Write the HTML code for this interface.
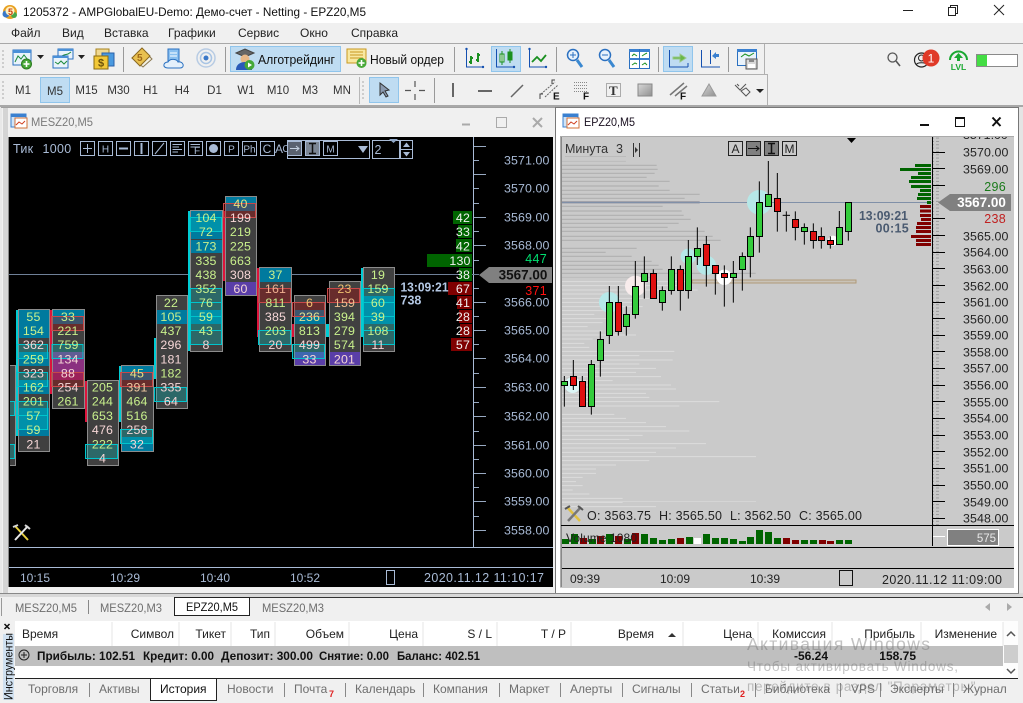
<!DOCTYPE html>
<html><head><meta charset="utf-8"><title>MT5</title>
<style>
html,body{margin:0;padding:0;background:#f0f0f0;overflow:hidden}
svg{display:block;font-family:"Liberation Sans",sans-serif}
rect{shape-rendering:crispEdges}
text{font-size:12px;fill:#222}
.ax text{font-size:12.4px;fill:#a9bbd6;letter-spacing:.1px}
.ar text{font-size:12.4px;fill:#222;letter-spacing:.1px}
.fp text{font-size:12.4px;text-anchor:middle;letter-spacing:.2px}
.g{fill:#c8f08c}.p{fill:#f5d6d6}
.t{fill:#007a9e}.m{fill:#8a3080}.u{fill:#5a3ea8}
.cb{fill:rgba(0,200,200,.3);stroke:#00c4cc;stroke-width:1}
.rb{fill:rgba(200,0,0,.3);stroke:#c84848;stroke-width:1}
.col{fill:#404040;stroke:#8c8c8c;stroke-width:1}
.tb text{font-size:11.5px;fill:#333;text-anchor:middle}
.hd text{text-anchor:end;fill:#222}
.tab text{fill:#6e6e6e}
.btn{fill:#bfdcf2;stroke:#90c5ec}
.cnd .u1{fill:#34cc3c;stroke:#000;stroke-width:3}
.cnd .d1{fill:#e01010;stroke:#000;stroke-width:3}
.lb rect{fill:none;stroke:#a9bbd6}
.lb text{font-size:10px;fill:#a9bbd6;text-anchor:middle}
</style></head><body>
<svg width="1023" height="703" viewBox="0 0 1023 703" xmlns="http://www.w3.org/2000/svg">
<defs>
<pattern id="mn" width="8" height="3.332" patternUnits="userSpaceOnUse" y="1"><rect width="6" height="1" fill="#9a9a9a"/></pattern>
<linearGradient id="gr" x1="0" y1="0" x2="1" y2="1"><stop offset="0" stop-color="#d8d8d8"/><stop offset="1" stop-color="#909090"/></linearGradient>
</defs>
<rect width="1023" height="703" fill="#f0f0f0"/>
<!-- title -->
<rect width="1023" height="23" fill="#fff"/>
<g>
<circle cx="10" cy="12" r="7" fill="#e8a020"/><circle cx="6" cy="14" r="3.5" fill="#3a78c8"/><circle cx="14" cy="15" r="3" fill="#48a848"/><circle cx="10" cy="11" r="4.5" fill="#fff2c0"/>
<text x="8" y="15" style="font-size:9px;font-weight:bold;fill:#c84010">5</text>
</g>
<text x="23" y="16" textLength="343" lengthAdjust="spacingAndGlyphs" style="font-size:12px;fill:#111">1205372 - AMPGlobalEU-Demo: Демо-счет - Netting - EPZ20,M5</text>
<path d="M903 10.5H913M1004 5L994 15M994 5L1004 15" stroke="#222" fill="none"/>
<path d="M948.5 7.5H955.5V15.5H948.5ZM950.5 7.5V5.5H957.5V13.5H955.5" stroke="#222" fill="none"/>
<!-- menu -->
<g style="fill:#222">
<text x="11" y="37">Файл</text><text x="62" y="37">Вид</text><text x="104" y="37">Вставка</text><text x="168" y="37">Графики</text><text x="238" y="37">Сервис</text><text x="300" y="37">Окно</text><text x="351" y="37">Справка</text>
</g>
<rect x="0" y="43" width="1023" height="1" fill="#a8a8a8"/>
<rect x="0" y="74" width="768" height="1" fill="#b0b0b0"/>
<rect x="764" y="44" width="1" height="30" fill="#b0b0b0"/>
<rect x="767" y="75" width="1" height="30" fill="#b0b0b0"/>
<rect x="0" y="105" width="1023" height="2" fill="#a8a8a8"/>
<rect x="359" y="77" width="1" height="27" fill="#b8b8b8"/>
<path d="M3 50V70M3 81V101" stroke="#aaa" stroke-dasharray="2 2"/>
<path d="M363 81V101" stroke="#aaa" stroke-dasharray="2 2"/>
<!-- toolbar1 icons -->
<g>
<rect x="13" y="50" width="18" height="15" fill="#eaf3fb" stroke="#2a70c0"/><rect x="13" y="50" width="18" height="3" fill="#4a90d8"/>
<path d="M15 62L18 56L21 59L24 55L28 60" stroke="#1c8a3c" fill="none"/>
<circle cx="26.500" cy="64" r="5" fill="#48a838" stroke="#2c7a20"/><path d="M23.500 64H29.500M26.500 61V67" stroke="#fff" stroke-width="1.600"/>
<path d="M37 55H44L40.500 59Z" fill="#222"/>
<rect x="58" y="49" width="15" height="10" fill="#eaf3fb" stroke="#2a70c0"/><rect x="58" y="49" width="15" height="2" fill="#4a90d8"/>
<path d="M60 57L64 55L68 54L71 52" stroke="#1c8a3c" fill="none"/>
<rect x="53" y="56" width="15" height="12" fill="#eaf3fb" stroke="#2a70c0"/><rect x="53" y="56" width="15" height="2" fill="#4a90d8"/>
<path d="M55 62L58 64L61 61L64 64L67 61" stroke="#1c8a3c" fill="none"/>
<path d="M78 55H85L81.500 59Z" fill="#222"/>
<rect x="96" y="49" width="13" height="13" fill="#f0d890" stroke="#a88420"/>
<rect x="102" y="53" width="12" height="13" fill="#4a9ae0" stroke="#2a60a8"/>
<rect x="94" y="56" width="14" height="13" fill="#f2c838" stroke="#8a6a10"/>
<text x="98" y="66.500" style="font-size:11px;font-weight:bold;fill:#6a5008">$</text>
<rect x="123" y="47" width="1" height="25" fill="#999"/>
<path d="M143 50L152 59L143 67L132 58Z" fill="#f2f0e4" stroke="#8a7850"/>
<path d="M132 58L142 48L150 56L140 66Z" fill="#e8c050" stroke="#8a6820"/>
<text x="137" y="61" style="font-size:10px;font-weight:bold;fill:#a06818">5</text>
<rect x="168" y="49" width="11" height="14" fill="#8ac0f0" stroke="#2a70c0"/><path d="M170 53H177M170 56H177" stroke="#fff"/>
<path d="M168 68C162 68 163 62 168 62C170 58 177 59 178 62C184 61 185 68 180 68Z" fill="#e4f0fb" stroke="#2a70c0"/>
<circle cx="206" cy="58" r="2.500" fill="#3a78c8"/><circle cx="206" cy="58" r="5.500" fill="none" stroke="#a8c4e4" stroke-width="1.500"/><circle cx="206" cy="58" r="9" fill="none" stroke="#b8cce4" stroke-width="1.500"/>
<rect x="225" y="47" width="1" height="25" fill="#999"/>
<rect class="btn" x="230.500" y="46.500" width="110" height="25"/>
<path d="M236 53L245 49L254 53L245 57Z" fill="#666" stroke="#444"/>
<circle cx="245" cy="59" r="4.500" fill="#e8b888"/><path d="M236 70C236 64 241 62 245 62C249 62 252 64 252 70Z" fill="#2a5ab8"/>
<circle cx="249.500" cy="65" r="5" fill="#44a838"/><path d="M248 62.500L252 65L248 67.500Z" fill="#fff"/>
<text x="258" y="64" textLength="77" lengthAdjust="spacingAndGlyphs" style="font-size:12.500px;fill:#111">Алготрейдинг</text>
<rect x="347" y="49" width="19" height="14" fill="#f8e8a0" stroke="#c89820"/><path d="M350 52H363M350 55H363M350 58H363" stroke="#c89820"/>
<circle cx="361.500" cy="63" r="5" fill="#48a838"/><path d="M358.500 63H364.500M361.500 60V66" stroke="#fff" stroke-width="1.600"/>
<text x="370" y="64" textLength="74" lengthAdjust="spacingAndGlyphs" style="font-size:12.500px;fill:#111">Новый ордер</text>
<rect x="454" y="47" width="1" height="25" fill="#999"/>
<!-- chart types -->
<path d="M466.500 49V67H484" stroke="#1450b0" fill="none"/><circle cx="466.500" cy="49" r="1.200" fill="#1450b0"/><circle cx="483" cy="67" r="1.200" fill="#1450b0"/>
<path d="M471 56V64M469 62H471M471 58H473M478 53V62M476 60H478M478 55H480" stroke="#1a9020" stroke-width="2" fill="none"/>
<rect class="btn" x="491.500" y="46.500" width="29" height="25"/>
<path d="M496.500 49V67H515" stroke="#1450b0" fill="none"/><circle cx="514" cy="67" r="1.200" fill="#1450b0"/>
<rect x="500" y="54" width="4" height="8" fill="#fff" stroke="#1a9020"/><rect x="508" y="52" width="4" height="8" fill="#1a9020" stroke="#1a9020"/><path d="M502 51V65M510 49V63" stroke="#1a9020"/>
<path d="M529.500 49V67H547" stroke="#1450b0" fill="none"/><circle cx="546" cy="67" r="1.200" fill="#1450b0"/><circle cx="529.500" cy="49" r="1.200" fill="#1450b0"/>
<path d="M532 62L537 57L541 61L546 55" stroke="#1a9020" stroke-width="1.800" fill="none"/>
<rect x="556" y="47" width="1" height="25" fill="#999"/>
<circle cx="573" cy="55" r="5.500" fill="#e8f2fb" stroke="#2a70c0" stroke-width="1.500"/><path d="M570 55H576M573 52V58" stroke="#2a70c0"/><path d="M577 60L582 67" stroke="#3a88d0" stroke-width="3"/>
<circle cx="605" cy="55" r="5.500" fill="#e8f2fb" stroke="#2a70c0" stroke-width="1.500"/><path d="M602 55H608" stroke="#2a70c0"/><path d="M609 60L614 67" stroke="#3a88d0" stroke-width="3"/>
<rect x="629.500" y="49.500" width="20" height="19" fill="#fff" stroke="#2a70c0"/><rect x="629" y="49" width="21" height="3" fill="#3a80d0"/><rect x="629" y="58" width="21" height="2" fill="#3a80d0"/><rect x="639" y="49" width="1" height="20" fill="#2a70c0"/>
<path d="M632 56L634 54L637 56M642 56L645 54L647 53M632 65L635 63L637 64M642 65L645 63L647 65" stroke="#1a9020" fill="none"/>
<rect x="658" y="47" width="1" height="25" fill="#999"/>
<rect class="btn" x="663.500" y="46.500" width="29" height="25"/>
<path d="M669.500 50V67H688M688 63V67" stroke="#1450b0" fill="none"/>
<path d="M673 57H680V54L686 58L680 62V59H673Z" fill="#68b848" stroke="#9ac888"/>
<path d="M701.500 50V67H720M710.500 50V64" stroke="#1450b0" fill="none"/>
<path d="M719 54H716V52L712 56L716 59V57H719Z" fill="#3a80d0"/>
<rect x="728" y="47" width="1" height="25" fill="#999"/>
<rect x="737.500" y="49.500" width="19" height="16" fill="#eaf3fb" stroke="#2a70c0"/><rect x="737" y="49" width="20" height="3" fill="#3a80d0"/>
<path d="M741 57L745 54L749 56L754 53" stroke="#1a9020" fill="none"/>
<path d="M746 59H757V69H746Z" fill="#d8d8d8" stroke="#555"/><rect x="749" y="59" width="5" height="3" fill="#888"/><rect x="748" y="64" width="7" height="4" fill="#fff"/>
<!-- right status -->
<circle cx="892.500" cy="57.500" r="4.500" fill="none" stroke="#555" stroke-width="1.300"/><path d="M896 61L900 66" stroke="#555" stroke-width="1.600"/>
<circle cx="921.500" cy="60" r="7" fill="none" stroke="#222" stroke-width="1.200"/><circle cx="921.500" cy="58" r="3" fill="none" stroke="#222"/><path d="M916 65C917 62 926 62 927 65" fill="none" stroke="#222"/>
<circle cx="931" cy="58" r="8.500" fill="#e03a28"/><text x="931" y="62.500" style="font-size:12px;fill:#fff;text-anchor:middle">1</text>
<path d="M950 60A8.500 8.500 0 0 1 967 60" fill="none" stroke="#1aa832" stroke-width="2"/><path d="M958.500 53L963 58H960V61H957V58H954Z" fill="#1aa832"/>
<text x="958.500" y="70" style="font-size:8.500px;fill:#1aa832;text-anchor:middle;font-weight:bold">LVL</text>
<rect x="976.500" y="54.500" width="41" height="12" fill="#fff" stroke="#8a8a8a"/><rect x="977" y="55" width="10" height="11" fill="#44dd44"/>
<!-- toolbar2 -->
<rect class="btn" x="40.500" y="77.500" width="29" height="25"/>
<g class="tb">
<text x="23" y="94">M1</text><text x="55" y="95">M5</text><text x="86.500" y="94">M15</text><text x="118.500" y="94">M30</text><text x="150.500" y="94">H1</text><text x="182" y="94">H4</text><text x="214.500" y="94">D1</text><text x="246" y="94">W1</text><text x="278" y="94">M10</text><text x="310" y="94">M3</text><text x="342" y="94">MN</text>
</g>
<rect class="btn" x="369.500" y="77.500" width="29" height="25"/>
<path d="M380 83L380 95L383 92L386 97L388 96L385 91L389 90Z" fill="#8a9ab0" stroke="#333"/>
<path d="M405 90.500H411M419 90.500H425M415 81V87M415 94V100" stroke="#555" stroke-width="1.200"/>
<rect x="434" y="78" width="1" height="25" fill="#999"/>
<rect x="452" y="83" width="2" height="14" fill="#666"/>
<rect x="478" y="90" width="14" height="2" fill="#666"/>
<path d="M511 97L523 85" stroke="#666" stroke-width="1.500"/>
<path d="M541 94L555 82M545 97L558 85" stroke="#666" stroke-dasharray="2 1"/><path d="M540 99V94H543M552 84V80H555" stroke="#444" fill="none"/>
<text x="553" y="99.500" style="font-size:10px;font-weight:bold;fill:#111">E</text>
<path d="M574 82.500H587M574 85.500H587M574 88.500H587M574 91.500H587" stroke="#888" stroke-dasharray="1 1"/>
<text x="583" y="99.500" style="font-size:10px;font-weight:bold;fill:#111">F</text>
<rect x="606.500" y="83.500" width="14" height="13" fill="none" stroke="#666" stroke-dasharray="1 1"/>
<text x="609" y="95" style="font-family:'Liberation Serif',serif;font-size:13px;font-weight:bold;fill:#333">T</text>
<rect x="638" y="84" width="14" height="12" fill="url(#gr)" stroke="#888"/>
<path d="M670 95L684 83M675 96L687 86" stroke="#777" stroke-width="1.500"/>
<text x="680" y="99.500" style="font-size:10px;font-weight:bold;fill:#111">F</text>
<path d="M702 96L709 84L716 96Z" fill="url(#gr)" stroke="#999"/>
<path d="M735 85L740 90L746 84M737 84L739 86M741 91L746 96L750 92L746 88Z" fill="none" stroke="#555"/>
<path d="M756 89H764L760 93Z" fill="#222"/>

<!-- left window -->
<rect x="0" y="107" width="555" height="487" fill="#f0f0f0"/>
<rect x="0" y="107" width="2" height="487" fill="#e8e8e8"/>
<rect x="3" y="107" width="5" height="487" fill="#d4d4d4"/>
<rect x="8" y="137" width="1" height="450" fill="#888"/>
<rect x="1" y="107" width="554" height="1" fill="#a0a0a0"/>
<g>
<rect x="11" y="114" width="15" height="13" fill="#cfe4f8" stroke="#3a80d0"/><rect x="11" y="114" width="15" height="3" fill="#3a80d0"/><rect x="15" y="118" width="12" height="10" fill="#fff" stroke="#d07038"/><path d="M16 125L19 122L22 124L25 121" stroke="#d04020" fill="none"/>
</g>
<text x="31" y="126" style="fill:#7a7a7a" textLength="62" lengthAdjust="spacingAndGlyphs">MESZ20,M5</text>
<path d="M462 124.500H470" stroke="#aaa" stroke-width="2"/>
<rect x="496.500" y="117.500" width="10" height="10" fill="none" stroke="#aaa"/>
<path d="M533 118L542 127M542 118L533 127" stroke="#aaa" stroke-width="2"/>
<rect x="9" y="137" width="544" height="450" fill="#000"/>
<!-- left axis -->
<rect x="473" y="137" width="1" height="410" fill="#a9bbd6"/>
<path d="M473 146.500H486M473 160.500H479M473 174.500H486M473 188.500H479M473 203.500H479M473 217.500H486M473 231.500H479M473 245.500H486M473 260.500H479M473 288.500H479M473 302.500H486M473 316.500H479M473 330.500H486M473 344.500H479M473 358.500H486M473 373.500H479M473 387.500H486M473 402.500H479M473 416.500H486M473 431.500H479M473 445.500H486M473 459.500H479M473 473.500H486M473 487.500H479M473 501.500H486M473 516.500H479M473 530.500H486" stroke="#a9bbd6" fill="none" opacity=".9"/>
<g class="ax">
<text x="504" y="164.500">3571.00</text><text x="504" y="192.500">3570.00</text><text x="504" y="221.500">3569.00</text><text x="504" y="249.500">3568.00</text><text x="504" y="306.500">3566.00</text><text x="504" y="334.500">3565.00</text><text x="504" y="362.500">3564.00</text><text x="504" y="391.500">3563.00</text><text x="504" y="420.500">3562.00</text><text x="504" y="449.500">3561.00</text><text x="504" y="477.500">3560.00</text><text x="504" y="505.500">3559.00</text><text x="504" y="534.500">3558.00</text>
</g>
<rect x="9" y="274" width="470" height="1" fill="#6f8098"/>
<!-- left footprint -->
<g class="fp">
<!-- bars -->
<rect x="16" y="310" width="2" height="126" fill="#00ccd4"/>
<rect x="50" y="310" width="3" height="84" fill="#dc143c"/>
<rect x="85" y="381" width="3" height="41" fill="#dc143c"/>
<rect x="119" y="366" width="2" height="56" fill="#00ccd4"/>
<rect x="154" y="338" width="2" height="41" fill="#00ccd4"/>
<rect x="188" y="211" width="2" height="140" fill="#00ccd4"/>
<rect x="223" y="211" width="2" height="70" fill="#dc143c"/>
<rect x="257" y="268" width="2" height="69" fill="#dc143c"/>
<rect x="291" y="324" width="3" height="13" fill="#dc143c"/>
<rect x="326" y="324" width="3" height="13" fill="#00ccd4"/>
<rect x="361" y="268" width="2" height="69" fill="#00ccd4"/>
<!-- col A -->
<rect fill="#404040" x="10" y="366" width="5" height="99"/>
<path d="M10 365.500H15.500V465.500H10" fill="none" stroke="#8c8c8c"/>
<rect fill="#2d6969" x="10" y="401" width="5" height="14"/><rect fill="#2d6969" x="10" y="444" width="5" height="14"/>
<path d="M10 401.500H14.500V415.500H10M10 444.500H14.500V458.500H10" fill="none" stroke="#00c4cc"/>
<!-- col B -->
<rect class="col" x="18.500" y="309.500" width="31" height="142"/>
<rect class="t" x="19" y="310" width="30" height="28"/><rect class="t" x="19" y="352" width="30" height="14"/><rect class="t" x="19" y="380" width="30" height="14"/><rect class="t" x="19" y="408" width="30" height="28"/>
<rect class="cb" x="16.500" y="344.500" width="31" height="14"/><rect class="cb" x="16.500" y="372.500" width="31" height="14"/><rect class="cb" x="16.500" y="401.500" width="31" height="14"/><rect class="cb" x="16.500" y="415.500" width="31" height="14"/>
<text class="g" x="33.500" y="321">55</text><text class="g" x="33.500" y="335">154</text><text class="p" x="33.500" y="349">362</text><text class="g" x="33.500" y="363.500">259</text><text class="p" x="33.500" y="377.500">323</text><text class="g" x="33.500" y="391.500">162</text><text class="g" x="33.500" y="405.500">201</text><text class="g" x="33.500" y="420">57</text><text class="g" x="33.500" y="434">59</text><text class="p" x="33.500" y="448.500">21</text>
<!-- col C -->
<rect class="col" x="52.500" y="309.500" width="32" height="99"/>
<rect class="t" x="53" y="310" width="31" height="14"/><rect class="m" x="53" y="352" width="31" height="28"/>
<rect class="cb" x="52" y="344.500" width="31" height="14"/><rect class="rb" x="51.500" y="316.500" width="32" height="14"/><rect class="rb" x="51.500" y="372.500" width="32" height="14"/>
<text class="g" x="68" y="321">33</text><text class="g" x="68" y="335">221</text><text class="g" x="68" y="349">759</text><text class="p" x="68" y="363.500">134</text><text class="p" x="68" y="377.500">88</text><text class="p" x="68" y="391.500">254</text><text class="g" x="68" y="405.500">261</text>
<!-- col D -->
<rect class="col" x="87.500" y="380.500" width="31" height="85"/>
<rect class="cb" x="85.500" y="444.500" width="32" height="14"/>
<text class="g" x="102.500" y="391.500">205</text><text class="g" x="102.500" y="405.500">244</text><text class="g" x="102.500" y="420">653</text><text class="p" x="102.500" y="434">476</text><text class="g" x="102.500" y="448.500">222</text><text class="p" x="102.500" y="462.500">4</text>
<!-- col E -->
<rect class="col" x="121.500" y="365.500" width="32" height="86"/>
<rect class="t" x="122" y="366" width="31" height="14"/><rect class="t" x="122" y="437" width="31" height="14"/>
<rect class="rb" x="120.500" y="372.500" width="32" height="14"/><rect class="cb" x="120.500" y="429.500" width="32" height="14"/>
<text class="g" x="137" y="377.500" style="fill:#e8e080">45</text><text class="g" x="137" y="391.500" style="fill:#f0c8a0">391</text><text class="g" x="137" y="405.500">464</text><text class="g" x="137" y="420">516</text><text class="p" x="137" y="434">258</text><text class="p" x="137" y="448.500">32</text>
<!-- col F -->
<rect class="col" x="156.500" y="295.500" width="31" height="113"/>
<rect class="t" x="157" y="310" width="30" height="14"/>
<rect class="cb" x="154.500" y="387.500" width="32" height="14"/>
<text class="g" x="171" y="307">22</text><text class="g" x="171" y="321">105</text><text class="g" x="171" y="335">437</text><text class="p" x="171" y="349">296</text><text class="p" x="171" y="363.500">181</text><text class="g" x="171" y="377.500">182</text><text class="p" x="171" y="391.500">335</text><text class="p" x="171" y="405.500">64</text>
<!-- col G -->
<rect class="col" x="190.500" y="210.500" width="32" height="141"/>
<rect class="t" x="191" y="211" width="31" height="42"/><rect class="t" x="191" y="310" width="31" height="14"/>
<rect fill="#404040" x="191" y="239" width="31" height="1"/>
<rect class="cb" x="190.500" y="217.500" width="31" height="14"/><rect class="cb" x="190.500" y="288.500" width="31" height="14"/><rect class="cb" x="190.500" y="302.500" width="31" height="14"/><rect class="cb" x="190.500" y="316.500" width="31" height="14"/><rect class="cb" x="190.500" y="330.500" width="31" height="14"/>
<text class="g" x="206" y="222">104</text><text class="g" x="206" y="236">72</text><text class="g" x="206" y="250.500">173</text><text class="g" x="206" y="265">335</text><text class="g" x="206" y="279">438</text><text class="g" x="206" y="293">352</text><text class="g" x="206" y="307">76</text><text class="g" x="206" y="321">59</text><text class="g" x="206" y="335">43</text><text class="p" x="206" y="349">8</text>
<!-- col H -->
<rect class="col" x="225.500" y="196.500" width="31" height="99"/>
<rect class="t" x="226" y="197" width="30" height="14"/><rect class="u" x="226" y="282" width="30" height="13"/>
<rect class="rb" x="223.500" y="203.500" width="32" height="14"/>
<text class="g" x="240.500" y="208" style="fill:#e8e080">40</text><text class="p" x="240.500" y="222">199</text><text class="g" x="240.500" y="236">219</text><text class="g" x="240.500" y="250.500">225</text><text class="g" x="240.500" y="265">663</text><text class="p" x="240.500" y="279">308</text><text class="p" x="240.500" y="293">60</text>
<!-- col I -->
<rect class="col" x="259.500" y="267.500" width="32" height="84"/>
<rect class="t" x="260" y="268" width="31" height="14"/>
<rect class="rb" x="258.500" y="288.500" width="32" height="14"/><rect class="cb" x="258.500" y="330.500" width="32" height="14"/>
<text class="g" x="275.500" y="279">37</text><text class="g" x="275.500" y="293" style="fill:#f0b090">161</text><text class="g" x="275.500" y="307">811</text><text class="p" x="275.500" y="321">385</text><text class="g" x="275.500" y="335">203</text><text class="p" x="275.500" y="349">20</text>
<!-- col J -->
<rect class="col" x="294.500" y="295.500" width="31" height="70"/>
<rect class="t" x="295" y="310" width="30" height="14"/><rect class="u" x="295" y="352" width="30" height="13"/>
<rect class="rb" x="292.500" y="302.500" width="32" height="14"/><rect class="cb" x="292.500" y="344.500" width="32" height="14"/>
<text class="g" x="309.500" y="307" style="fill:#f0c070">6</text><text class="g" x="309.500" y="321" style="fill:#e0e090">236</text><text class="g" x="309.500" y="335">813</text><text class="p" x="309.500" y="349">499</text><text class="p" x="309.500" y="363.500">33</text>
<!-- col K -->
<rect class="col" x="329.500" y="281.500" width="31" height="84"/>
<rect class="u" x="330" y="352" width="30" height="13"/>
<rect class="rb" x="327.500" y="288.500" width="32" height="14"/>
<text class="g" x="344.500" y="293" style="fill:#f0c070">23</text><text class="g" x="344.500" y="307" style="fill:#f0c090">159</text><text class="g" x="344.500" y="321">394</text><text class="g" x="344.500" y="335">279</text><text class="g" x="344.500" y="349">574</text><text class="p" x="344.500" y="363.500">201</text>
<!-- col L -->
<rect class="col" x="363.500" y="267.500" width="31" height="84"/>
<rect class="t" x="364" y="296" width="30" height="28"/>
<rect class="cb" x="363.500" y="288.500" width="31" height="14"/><rect class="cb" x="363.500" y="302.500" width="31" height="14"/><rect class="cb" x="363.500" y="316.500" width="31" height="14"/><rect class="cb" x="363.500" y="330.500" width="31" height="14"/>
<text class="g" x="378" y="279">19</text><text class="g" x="378" y="293">159</text><text class="g" x="378" y="307">60</text><text class="g" x="378" y="321">39</text><text class="g" x="378" y="335">108</text><text class="p" x="378" y="349">11</text>
<!-- DOM -->
<rect fill="#006400" x="453" y="211" width="19" height="13"/><rect fill="#006400" x="458" y="225" width="14" height="13"/><rect fill="#006400" x="456" y="239" width="16" height="13"/><rect fill="#006400" x="427" y="254" width="45" height="13"/><rect fill="#006400" x="459" y="268" width="13" height="13"/>
<rect fill="#7f0000" x="448" y="282" width="24" height="13"/><rect fill="#7f0000" x="457" y="296" width="15" height="13"/><rect fill="#7f0000" x="459" y="310" width="13" height="13"/><rect fill="#7f0000" x="460" y="324" width="12" height="13"/><rect fill="#7f0000" x="451" y="338" width="21" height="13"/>
<text x="463" y="222" style="fill:#f0f0f0">42</text><text x="463" y="236" style="fill:#f0f0f0">33</text><text x="463" y="250.500" style="fill:#f0f0f0">42</text><text x="460" y="265" style="fill:#f0f0f0">130</text><text x="463" y="279" style="fill:#f0f0f0">38</text><text x="463" y="293" style="fill:#f0f0f0">67</text><text x="463" y="307" style="fill:#f0f0f0">41</text><text x="463" y="321" style="fill:#f0f0f0">28</text><text x="463" y="335" style="fill:#f0f0f0">28</text><text x="463" y="349" style="fill:#f0f0f0">57</text>
</g>
<text x="547" y="263" style="font-size:12.500px;fill:#00e070;text-anchor:end;letter-spacing:.3px">447</text>
<text x="547" y="295" style="font-size:12.500px;fill:#ff1010;text-anchor:end;letter-spacing:.3px">371</text>
<path d="M479 275L489 267H552V283H489Z" fill="#808080"/>
<text x="523" y="279.500" style="font-size:13.500px;font-weight:bold;fill:#111;text-anchor:middle">3567.00</text>
<text x="400.500" y="291.500" textLength="48" lengthAdjust="spacingAndGlyphs" style="font-size:12.500px;font-weight:bold;fill:#b4c8e4">13:09:21</text>
<text x="400.500" y="304.500" style="font-size:12.500px;font-weight:bold;fill:#b4c8e4">738</text>
<!-- left top labels -->
<g class="lb">
<text x="13" y="153" style="font-size:12.500px;text-anchor:start;letter-spacing:.3px">Тик</text>
<text x="42.500" y="153" style="font-size:12.500px;text-anchor:start;letter-spacing:.3px">1000</text>
<rect x="80.500" y="141.500" width="14" height="14"/><path d="M83 148.500H92M87.500 144V153" stroke="#a9bbd6"/>
<rect x="98.500" y="141.500" width="14" height="14"/><text x="105.500" y="152.500">H</text>
<rect x="116.500" y="141.500" width="14" height="14"/><path d="M119 148.500H128" stroke="#a9bbd6" stroke-width="2"/>
<rect x="134.500" y="141.500" width="14" height="14"/><path d="M141.500 143V154" stroke="#a9bbd6" stroke-width="2"/>
<rect x="152.500" y="141.500" width="14" height="14"/><path d="M155 154L164 143" stroke="#a9bbd6"/>
<rect x="170.500" y="141.500" width="14" height="14"/><path d="M172.500 144.500H182M172.500 147H179M172.500 149.500H182M172.500 152H178" stroke="#a9bbd6"/>
<rect x="188.500" y="141.500" width="14" height="14"/><path d="M190.500 144.500H200M190.500 147H200" stroke="#a9bbd6"/><text x="197" y="154">F</text>
<rect x="206.500" y="141.500" width="14" height="14"/><circle cx="213.500" cy="148.500" r="4.500" fill="#a9bbd6"/>
<rect x="224.500" y="141.500" width="14" height="14"/><text x="231.500" y="152.500">P</text>
<rect x="242.500" y="141.500" width="14" height="14"/><text x="249.500" y="152.500">Ph</text>
<rect x="260.500" y="141.500" width="14" height="14"/><text x="267" y="153" style="font-size:12px">C</text>
<text x="279" y="153" style="font-size:12px">A</text><text x="286" y="152" style="font-size:10px">C</text>
<rect x="287.500" y="140.500" width="82" height="18" style="stroke:#a9bbd6"/>
<rect x="287.500" y="141.500" width="14" height="14" style="fill:#5a6270"/><path d="M290 148.500H299M296 146L299 148.500L296 151" stroke="#c4d0e0" fill="none"/>
<rect x="305.500" y="141.500" width="14" height="14" style="fill:#7c8694"/><path d="M309 143.500H316M309 153.500H316M312.500 143.500V153.500" stroke="#111" stroke-width="1.500"/>
<rect x="323.500" y="141.500" width="14" height="14"/><text x="330.500" y="152.500">M</text>
<path d="M358 146H368L363 153Z" fill="#a9bbd6"/>
<rect x="372.500" y="140.500" width="27" height="18"/>
<text x="378" y="154" style="font-size:12.500px">2</text>
<rect x="400.500" y="140.500" width="12" height="18"/><path d="M400 149.500H412" stroke="#a9bbd6"/><path d="M403 147L406.500 142.500L410 147ZM403 152H410L406.500 156.500Z" fill="#a9bbd6"/>
<path d="M389 139H398L393.500 143Z" fill="#90a8c8"/>
</g>
<!-- tools -->
<g>
<path d="M15 526L28 540" stroke="#e8d040" stroke-width="2"/><path d="M28 526L15 540" stroke="#e8e8e8" stroke-width="2"/><path d="M13 527L18 525M25 525L30 529" stroke="#d8d8d8" stroke-width="2"/>
</g>
<!-- left bottom -->
<rect x="9" y="547" width="544" height="1" fill="#a9bbd6"/>
<rect x="9" y="567" width="544" height="1" fill="#a9bbd6"/>
<g style="fill:#a9bbd6">
<text x="20" y="582" style="fill:#a9bbd6">10:15</text><text x="110" y="582" style="fill:#a9bbd6">10:29</text><text x="200" y="582" style="fill:#a9bbd6">10:40</text><text x="290" y="582" style="fill:#a9bbd6">10:52</text>
<text x="424" y="582" textLength="120" style="font-size:12.500px;fill:#a9bbd6;">2020.11.12 11:10:17</text>
</g>
<rect x="386.500" y="570.500" width="8" height="14" fill="none" stroke="#a9bbd6"/>

<!-- right window -->
<rect x="555" y="107" width="464" height="487" fill="#fff"/>
<rect x="555" y="107" width="464" height="1" fill="#777"/>
<rect x="555" y="107" width="1" height="487" fill="#777"/>
<rect x="1018" y="107" width="1" height="487" fill="#777"/>
<rect x="1019" y="107" width="4" height="487" fill="#e4e4e4"/>
<rect x="560" y="137" width="454" height="451" fill="#cacaca"/>
<rect x="561" y="137" width="1" height="450" fill="#888"/>
<rect x="560" y="137" width="1" height="450" fill="#aaa"/>
<!-- profile -->
<g transform="translate(556 140) scale(.33333)" fill="none">
<path d="M18 412H300M18 64H210" stroke="#bdbdbd" stroke-width="3"/>
<path d="M18 76H302M18 88H305M18 100H296M18 112H272M18 124H341M18 138H308M18 151H341M18 163H431M18 175H386M18 199H320M18 213H377M18 226H383M18 238H404M18 250H368M18 262H335M18 274H446M18 289H470M18 301H494M18 325H242M18 337H149M18 349H227M18 364H287M18 376H308M18 388H320M18 400H599" stroke="#b0b0b0" stroke-width="3.500"/>
<path d="M18 187H431" stroke="#8a8a98" stroke-width="6"/>
<path d="M18 425H420M18 437H380M18 450H425M18 462H260M18 475H280M18 487H250M18 500H260M18 512H150M18 523H115M18 536H170M18 548H140M18 560H95M18 573H140M18 585H240M18 597H110M18 610H85M18 622H100M18 634H355M18 647H250M18 660H350M18 672H250M18 685H300M18 697H240M18 710H315M18 722H170M18 735H345M18 747H360M18 760H270M18 772H280M18 785H490M18 798H370M18 823H175M18 835H210M18 848H270M18 860H330M18 873H400M18 886H260M18 898H220M18 911H450M18 924H360M18 937H300M18 950H600M18 962H280M18 975H180M18 987H120M18 1000H120M18 1012H80M18 1025H60M18 1037H80M18 1050H50M18 1062H100M18 1075H200M18 1087H140M18 1100H300M18 1087H200" stroke="#dcdcdc" stroke-width="3"/>
<path d="M18 1085H600" stroke="#dcdcdc" stroke-width="2"/>
</g>
<rect x="692" y="280" width="164" height="3" fill="#c9c3b8" stroke="#b09a78"/>
<rect x="562" y="202" width="370" height="1" fill="#8090a8"/>
<!-- bubbles -->
<g transform="translate(556 140) scale(.33333)">
<circle cx="160" cy="487" r="31" fill="#b6e8e8"/><circle cx="50" cy="735" r="24" fill="#dcf6f6"/><circle cx="238" cy="438" r="31" fill="#f8ecec"/><circle cx="397" cy="349" r="23" fill="#b6e8e8"/><circle cx="451" cy="376" r="29" fill="#b6e8e8"/><circle cx="505" cy="412" r="23" fill="#fff"/><circle cx="610" cy="187" r="37" fill="#b6e8e8"/><circle cx="831" cy="302" r="15" fill="#fff"/>
</g>
<!-- candles -->
<g class="cnd" transform="translate(556 140) scale(.33333)">
<path d="M25 708V800M52 660V750M79 708V800M106 660V824M133 574V710M160 438V612M187 438V587M211 499V587M238 363V536M265 349V476M292 388V476M319 439V512M346 349V464M373 376V512M397 300V476M424 262V375M451 288V440M478 376V464M505 376V500M532 363V488M559 337V452M583 262V412M610 124V338M637 63V200M664 99V275M691 214V275M718 214V301M745 250V314M772 250V326M796 262V326M823 289V326M850 213V313M877 187V302" stroke="#000" stroke-width="3"/>
<path d="M680 226H702" stroke="#000" stroke-width="3"/>
<rect class="u1" x="17" y="724" width="17" height="12"/>
<rect class="d1" x="44" y="709" width="17" height="27"/>
<rect class="d1" x="71" y="724" width="17" height="75"/>
<rect class="u1" x="98" y="673" width="17" height="126"/>
<rect class="u1" x="125" y="598" width="17" height="63"/>
<rect class="u1" x="152" y="487" width="17" height="99"/>
<rect class="d1" x="179" y="487" width="17" height="87"/>
<rect class="u1" x="203" y="523" width="17" height="36"/>
<rect class="u1" x="230" y="439" width="17" height="84"/>
<rect class="u1" x="257" y="400" width="17" height="24"/>
<rect class="d1" x="284" y="400" width="17" height="75"/>
<rect class="u1" x="311" y="451" width="17" height="36"/>
<rect class="u1" x="338" y="388" width="17" height="63"/>
<rect class="d1" x="365" y="388" width="17" height="63"/>
<rect class="u1" x="389" y="349" width="17" height="102"/>
<rect class="u1" x="416" y="325" width="17" height="24"/>
<rect class="d1" x="443" y="313" width="17" height="63"/>
<rect class="d1" x="470" y="376" width="17" height="24"/>
<rect class="d1" x="497" y="400" width="17" height="12"/>
<rect class="u1" x="524" y="400" width="17" height="12"/>
<rect class="u1" x="551" y="349" width="17" height="39"/>
<rect class="u1" x="575" y="289" width="17" height="60"/>
<rect class="u1" x="602" y="187" width="17" height="102"/>
<rect class="u1" x="629" y="163" width="17" height="36"/>
<rect class="d1" x="656" y="175" width="17" height="39"/>
<rect class="d1" x="710" y="238" width="17" height="24"/>
<rect class="u1" x="737" y="262" width="17" height="12"/>
<rect class="d1" x="764" y="274" width="17" height="27"/>
<rect class="d1" x="788" y="289" width="17" height="12"/>
<rect class="d1" x="815" y="301" width="17" height="12"/>
<rect class="u1" x="842" y="262" width="17" height="51"/>
<rect class="u1" x="869" y="187" width="17" height="87"/>
</g>
<!-- right axis -->
<rect x="933" y="137" width="6" height="388" fill="url(#mn)"/>
<rect x="932" y="137" width="1" height="388" fill="#000"/>
<path d="M932 152.500H945M932 168.500H945M932 185.500H945M932 218.500H945M932 235.500H945M932 252.500H945M932 268.500H945M932 285.500H945M932 302.500H945M932 318.500H945M932 335.500H945M932 351.500H945M932 368.500H945M932 385.500H945M932 401.500H945M932 418.500H945M932 435.500H945M932 451.500H945M932 468.500H945M932 485.500H945M932 501.500H945M932 518.500H945" stroke="#000" fill="none"/>
<g class="ar">
<text x="963" y="156.500">3570.00</text><text x="963" y="173.500">3569.00</text><text x="963" y="240.500">3565.00</text><text x="963" y="256.500">3564.00</text><text x="963" y="273.500">3563.00</text><text x="963" y="290.500">3562.00</text><text x="963" y="306.500">3561.00</text><text x="963" y="323.500">3560.00</text><text x="963" y="339.500">3559.00</text><text x="963" y="356.500">3558.00</text><text x="963" y="372.500">3557.00</text><text x="963" y="389.500">3556.00</text><text x="963" y="406.500">3555.00</text><text x="963" y="422.500">3554.00</text><text x="963" y="439.500">3553.00</text><text x="963" y="456.500">3552.00</text><text x="963" y="472.500">3551.00</text><text x="963" y="489.500">3550.00</text><text x="963" y="506.500">3549.00</text><text x="963" y="522.500">3548.00</text>
</g>
<!-- DOM right -->
<g transform="translate(790 140) scale(.33333)" style="fill:#006400">
<rect fill="#006400" x="375" y="72" width="48" height="9"/><rect fill="#006400" x="330" y="84" width="93" height="9"/><rect fill="#006400" x="384" y="96" width="39" height="9"/><rect fill="#006400" x="363" y="108" width="60" height="9"/><rect fill="#006400" x="357" y="120" width="66" height="9"/><rect fill="#006400" x="363" y="135" width="60" height="9"/><rect fill="#006400" x="390" y="147" width="33" height="9"/><rect fill="#006400" x="384" y="159" width="39" height="9"/><rect fill="#006400" x="381" y="171" width="42" height="9"/><rect fill="#006400" x="411" y="183" width="12" height="9"/>
<rect fill="#800000" x="390" y="195" width="33" height="9"/><rect fill="#800000" x="390" y="209" width="33" height="9"/><rect fill="#800000" x="390" y="222" width="33" height="9"/><rect fill="#800000" x="393" y="234" width="30" height="9"/><rect fill="#800000" x="381" y="246" width="42" height="9"/><rect fill="#800000" x="378" y="258" width="45" height="9"/><rect fill="#800000" x="378" y="270" width="45" height="9"/><rect fill="#800000" x="363" y="285" width="60" height="9"/><rect fill="#800000" x="378" y="297" width="45" height="9"/><rect fill="#800000" x="378" y="309" width="45" height="9"/>
</g>
<text x="1006" y="191" style="font-size:12.500px;fill:#1a7a1a;text-anchor:end;letter-spacing:.3px">296</text>
<text x="1006" y="223" style="font-size:12.500px;fill:#c02020;text-anchor:end;letter-spacing:.3px">238</text>
<path d="M938 202.500L950 194H1011V211H950Z" fill="#808080"/>
<text x="981.500" y="207" style="font-size:13.500px;font-weight:bold;fill:#fff;text-anchor:middle">3567.00</text>
<text x="859" y="220" textLength="49" lengthAdjust="spacingAndGlyphs" style="font-size:12.500px;font-weight:bold;fill:#4a5a70">13:09:21</text>
<text x="909" y="232.500" style="font-size:12.500px;font-weight:bold;fill:#4a5a70;text-anchor:end;letter-spacing:.3px">00:15</text>
<!-- right top -->
<text x="565" y="153" style="font-size:12.500px;fill:#333">Минута</text><text x="616" y="153" style="font-size:12.500px;fill:#333">3</text>
<path d="M633.500 143V157M639.500 143V157" stroke="#333"/><path d="M635 147L638 150L635 153Z" fill="#333"/>
<rect x="728.500" y="141.500" width="14" height="14" fill="none" stroke="#222"/><text x="735.500" y="153" style="font-size:12px;text-anchor:middle;fill:#222">A</text>
<rect x="746.500" y="141.500" width="14" height="14" fill="#808080" stroke="#222"/><path d="M748 148.500H759M756 146L759 148.500L756 151" stroke="#111" fill="none"/>
<rect x="764.500" y="141.500" width="14" height="14" fill="#808080" stroke="#222"/><path d="M768 143.500H775M768 153.500H775M771.500 143.500V153.500" stroke="#111" stroke-width="1.500"/>
<rect x="782.500" y="141.500" width="14" height="14" fill="none" stroke="#222"/><text x="789.500" y="153" style="font-size:12px;text-anchor:middle;fill:#222">M</text>
<path d="M847 138H856L851.500 143Z" fill="#000"/>
<path d="M565 156.500H626" stroke="#bbb"/>
<!-- right partial label + title -->
<text x="963" y="139" style="font-size:12.400px;fill:#222">3571.00</text>
<rect x="556" y="108" width="462" height="29" fill="#fff"/>
<rect x="560" y="136" width="454" height="1" fill="#aaa"/>
<g>
<rect x="563" y="114" width="15" height="13" fill="#cfe4f8" stroke="#3a80d0"/><rect x="563" y="114" width="15" height="3" fill="#3a80d0"/><rect x="567" y="118" width="12" height="10" fill="#fff" stroke="#d07038"/><path d="M568 125L571 122L574 124L577 121" stroke="#d04020" fill="none"/>
</g>
<text x="584" y="126" textLength="51" lengthAdjust="spacingAndGlyphs" style="fill:#1a1020">EPZ20,M5</text>
<path d="M920 125H929" stroke="#111" stroke-width="2"/>
<rect x="955.500" y="117.500" width="9" height="9" fill="none" stroke="#111"/><rect x="955" y="117" width="10" height="2" fill="#111"/>
<path d="M992.500 117.500L1000.500 126M1000.500 117.500L992.500 126" stroke="#111" stroke-width="2"/>
<!-- OHLC -->
<g>
<path d="M567 507L580 521" stroke="#e0c040" stroke-width="2.500"/><path d="M581 507L568 521" stroke="#777" stroke-width="2.500"/><path d="M565 509L570 506M578 506L583 510" stroke="#555" stroke-width="2"/>
</g>
<text x="587" y="520" textLength="64" style="font-size:12.500px;fill:#222">O: 3563.75</text>
<text x="659" y="520" textLength="63" style="font-size:12.500px;fill:#222">H: 3565.50</text>
<text x="730" y="520" textLength="61" style="font-size:12.500px;fill:#222">L: 3562.50</text>
<text x="799" y="520" textLength="63" style="font-size:12.500px;fill:#222">C: 3565.00</text>
<rect x="561" y="525" width="372" height="1" fill="#000"/><rect x="933" y="525" width="81" height="1" fill="#000"/>
<!-- volume -->
<rect x="562" y="539" width="7" height="5" fill="#006400"/><rect x="571" y="534" width="7" height="10" fill="#006400"/><rect x="580" y="538" width="7" height="6" fill="#800000"/><rect x="589" y="539" width="7" height="5" fill="#006400"/><rect x="597" y="536" width="7" height="8" fill="#800000"/><rect x="606" y="534" width="7" height="10" fill="#006400"/><rect x="615" y="536" width="7" height="8" fill="#800000"/><rect x="624" y="539" width="7" height="5" fill="#006400"/><rect x="632" y="533" width="7" height="11" fill="#800000"/><rect x="641" y="534" width="7" height="10" fill="#006400"/><rect x="650" y="538" width="7" height="6" fill="#006400"/><rect x="659" y="540" width="7" height="4" fill="#006400"/><rect x="668" y="539" width="7" height="5" fill="#006400"/><rect x="677" y="538" width="7" height="6" fill="#800000"/><rect x="686" y="537" width="7" height="7" fill="#006400"/><rect x="694" y="538" width="7" height="6" fill="#fff"/><rect x="703" y="534" width="7" height="10" fill="#006400"/><rect x="712" y="538" width="7" height="6" fill="#006400"/><rect x="721" y="538" width="7" height="6" fill="#006400"/><rect x="730" y="539" width="7" height="5" fill="#006400"/><rect x="739" y="541" width="7" height="3" fill="#006400"/><rect x="747" y="537" width="7" height="7" fill="#006400"/><rect x="756" y="530" width="7" height="14" fill="#006400"/><rect x="765" y="532" width="7" height="12" fill="#006400"/><rect x="774" y="538" width="7" height="6" fill="#006400"/><rect x="783" y="538" width="7" height="6" fill="#800000"/><rect x="792" y="540" width="7" height="4" fill="#800000"/><rect x="801" y="540" width="7" height="4" fill="#006400"/><rect x="810" y="540" width="7" height="4" fill="#006400"/><rect x="819" y="540" width="7" height="4" fill="#800000"/><rect x="827" y="541" width="7" height="3" fill="#800000"/><rect x="836" y="540" width="7" height="4" fill="#006400"/><rect x="845" y="540" width="7" height="4" fill="#006400"/>
<text x="566" y="542" textLength="71" style="font-size:12px;fill:#222">Volume 1080</text>
<rect x="932" y="525" width="1" height="21" fill="#000"/>
<path d="M933 536.500H945" stroke="#fff"/>
<rect x="947.500" y="529.500" width="51" height="16" fill="#808080" stroke="#fff"/>
<text x="996" y="542" style="font-size:11.500px;fill:#e8e8e8;text-anchor:end">575</text>
<rect x="562" y="547" width="452" height="1" fill="#000"/>
<rect x="562" y="568" width="452" height="1" fill="#000"/>
<text x="570" y="583" style="fill:#222">09:39</text><text x="660" y="583" style="fill:#222">10:09</text><text x="750" y="583" style="fill:#222">10:39</text>
<rect x="839.500" y="570.500" width="13" height="15" fill="none" stroke="#111"/>
<text x="882" y="584" textLength="120" style="font-size:12.500px;fill:#222;">2020.11.12 11:09:00</text>

<!-- tabs -->
<rect x="0" y="593" width="1023" height="4" fill="#d8d8d8"/>
<rect x="0" y="593" width="1019" height="1" fill="#888"/>
<rect x="250" y="597" width="773" height="1" fill="#333"/>
<rect x="0" y="598" width="1023" height="18" fill="#f0f0f0"/>
<rect x="1" y="598" width="1" height="18" fill="#999"/>
<rect x="174.500" y="597.500" width="75" height="18" fill="#fff" stroke="#222"/>
<rect x="0" y="616" width="1023" height="5" fill="#f0f0f0"/>
<g class="tab">
<text x="15" y="612" textLength="62" lengthAdjust="spacingAndGlyphs">MESZ20,M5</text>
<text x="100" y="612" textLength="62" lengthAdjust="spacingAndGlyphs">MESZ20,M3</text>
<text x="262" y="612" textLength="62" lengthAdjust="spacingAndGlyphs">MESZ20,M3</text>
</g>
<rect x="88" y="600" width="1" height="14" fill="#888"/>
<text x="186" y="611" textLength="52" lengthAdjust="spacingAndGlyphs" style="fill:#111">EPZ20,M5</text>
<path d="M990 603L985 607L990 611ZM1007 603L1012 607L1007 611Z" fill="#aaa"/>
<!-- table -->
<rect x="15" y="621" width="1003" height="58" fill="#fff"/>
<rect x="1003" y="621" width="15" height="58" fill="#fdfdfd"/>
<rect x="15" y="646" width="988" height="20" fill="#bfbfbf"/>
<rect x="1004" y="645" width="14" height="18" fill="#cdcdcd"/>
<path d="M1007 636L1011 632L1015 636M1007 669L1011 673L1015 669" stroke="#555" stroke-width="1.500" fill="none"/>
<path d="M112 622V646M179 622V646M231 622V646M275 622V646M349 622V646M423 622V646M497 622V646M571 622V646M683 622V646M758 622V646M832 622V646M921 622V646M1003 622V646" stroke="#e4e4e4" fill="none"/>
<g class="hd">
<text x="22" y="638" style="text-anchor:start">Время</text><text x="174" y="638">Символ</text><text x="226" y="638">Тикет</text><text x="270" y="638">Тип</text><text x="344" y="638">Объем</text><text x="418" y="638">Цена</text><text x="492" y="638">S / L</text><text x="566" y="638">T / P</text><text x="654" y="638">Время</text><text x="752" y="638">Цена</text><text x="826" y="638">Комиссия</text><text x="915" y="638">Прибыль</text><text x="997" y="638">Изменение</text>
</g>
<path d="M668 637L672 633L676 637Z" fill="#333"/>
<circle cx="24" cy="655" r="5" fill="none" stroke="#222"/><path d="M21 655H27M24 652V658" stroke="#222"/>
<g style="font-weight:bold">
<text x="37" y="660" textLength="98" lengthAdjust="spacingAndGlyphs" style="font-weight:bold;fill:#111">Прибыль: 102.51</text>
<text x="143" y="660" textLength="71" lengthAdjust="spacingAndGlyphs" style="font-weight:bold;fill:#111">Кредит: 0.00</text>
<text x="221" y="660" textLength="92" lengthAdjust="spacingAndGlyphs" style="font-weight:bold;fill:#111">Депозит: 300.00</text>
<text x="319" y="660" textLength="70" lengthAdjust="spacingAndGlyphs" style="font-weight:bold;fill:#111">Снятие: 0.00</text>
<text x="397" y="660" textLength="83" lengthAdjust="spacingAndGlyphs" style="font-weight:bold;fill:#111">Баланс: 402.51</text>
</g>
<text x="828" y="660" style="font-weight:bold;fill:#111;text-anchor:end">-56.24</text>
<text x="916" y="660" style="font-weight:bold;fill:#111;text-anchor:end">158.75</text>
<!-- left strip -->
<rect x="0" y="621" width="15" height="82" fill="#f0f0f0"/>
<rect x="3" y="634" width="11" height="66" fill="#cfe0f0"/>
<path d="M4.500 624L9.500 629M9.500 624L4.500 629" stroke="#111" stroke-width="1.500"/>
<text transform="translate(12.500 700) rotate(-90)" textLength="67" lengthAdjust="spacingAndGlyphs" style="font-size:12px;fill:#111">Инструменты</text>
<!-- bottom tabs -->
<rect x="15" y="679" width="1008" height="24" fill="#f0f0f0"/>
<rect x="15" y="678" width="136" height="1" fill="#222"/><rect x="216" y="678" width="802" height="1" fill="#222"/>
<rect x="150.500" y="678.500" width="66" height="22" fill="#fff" stroke="#222"/>
<rect x="151" y="677" width="65" height="3" fill="#fff"/><rect x="150" y="678" width="67" height="1" fill="#222"/>
<g class="tab">
<text x="28" y="693">Торговля</text><text x="99" y="693">Активы</text><text x="227" y="693">Новости</text><text x="294" y="693">Почта</text><text x="355" y="693">Календарь</text><text x="433" y="693">Компания</text><text x="509" y="693">Маркет</text><text x="570" y="693">Алерты</text><text x="632" y="693">Сигналы</text><text x="701" y="693">Статьи</text><text x="765" y="693" textLength="65">Библиотека</text><text x="851" y="693">VPS</text><text x="890" y="693">Эксперты</text><text x="963" y="693">Журнал</text>
</g>
<text x="160" y="693" style="fill:#111">История</text>
<text x="329" y="697" style="font-size:9px;font-weight:bold;fill:#e02020">7</text>
<text x="740" y="697" style="font-size:9px;font-weight:bold;fill:#e02020">2</text>
<path d="M89.500 683V697M284.500 683V697M345.500 683V697M423.500 683V697M499.500 683V697M560.500 683V697M622.500 683V697M691.500 683V697M755.500 683V697M840.500 683V697M880.500 683V697M953.500 683V697" stroke="#888" fill="none"/>
<!-- watermark -->
<text x="747" y="650" textLength="183" style="font-size:17.500px;fill:rgba(110,110,110,.42)">Активация Windows</text>
<text x="747" y="671" textLength="211" style="font-size:13.500px;fill:rgba(110,110,110,.42)">Чтобы активировать Windows,</text>
<text x="747" y="691" textLength="233" style="font-size:13.500px;fill:rgba(110,110,110,.42)">перейдите в раздел "Параметры".</text>
</svg>
</body></html>
